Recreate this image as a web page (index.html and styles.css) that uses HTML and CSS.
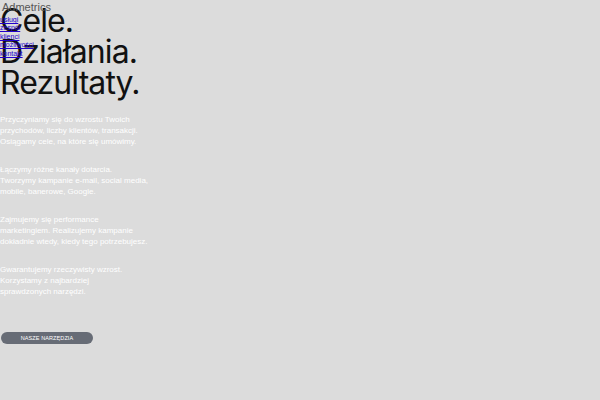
FILE: index.html
```html
<!DOCTYPE html>
<html lang="pl">
<head>
<meta charset="utf-8">
<title>Admetrics</title>
<link rel="stylesheet" href="styles.css">
</head>
<body>
<nav class="nav">
  <div class="brand">Admetrics</div>
  <ul class="menu">
    <li><a href="#">usługi</a></li>
    <li><a href="#">zespół</a></li>
    <li><a href="#">klienci</a></li>
    <li><a href="#">możliwości</a></li>
    <li><a href="#">kontakt</a></li>
  </ul>
</nav>
<main class="hero">
  <h1 class="title">Cele.<br>Działania.<br>Rezultaty.</h1>
  <div class="copy">
    <p>Przyczyniamy się do wzrostu Twoich<br>przychodów, liczby klientów, transakcji.<br>Osiągamy cele, na które się umówimy.</p>
    <p>Łączymy różne kanały dotarcia.<br>Tworzymy kampanie e-mail, social media,<br>mobile, banerowe, Google.</p>
    <p>Zajmujemy się performance<br>marketingiem. Realizujemy kampanie<br>dokładnie wtedy, kiedy tego potrzebujesz.</p>
    <p>Gwarantujemy rzeczywisty wzrost.<br>Korzystamy z najbardziej<br>sprawdzonych narzędzi.</p>
  </div>
  <a class="btn" href="#">NASZE NARZĘDZIA</a>
</main>
</body>
</html>
```
FILE: styles.css
```css
html, body {
  margin: 0;
  padding: 0;
  background: #dcdcdc;
}
body {
  font-family: "Liberation Sans", Arial, sans-serif;
  width: 600px;
  height: 400px;
  overflow: hidden;
  position: relative;
}
.nav {
  position: absolute;
  top: 0;
  left: 0;
  z-index: 2;
}
.brand {
  font-size: 11px;
  line-height: 11px;
  color: #555;
  padding: 2px 0 0 2px;
}
.menu {
  list-style: none;
  margin: 3px 0 0 0;
  padding: 0;
}
.menu li {
  font-size: 7px;
  line-height: 8.4px;
}
.menu a {
  color: #2200cc;
}
.title {
  margin: 0;
  padding-top: 5px;
  font-family: Inter, "Noto Sans", sans-serif;
  font-weight: 400;
  font-size: 32px;
  line-height: 31px;
  letter-spacing: -0.9px;
  color: #111;
}
.copy {
  margin-top: 16px;
}
.copy p {
  margin: 0 0 17px 0;
  font-size: 8px;
  line-height: 11px;
  color: #fff;
}
.btn {
  display: inline-flex;
  align-items: center;
  justify-content: center;
  margin-top: 18px;
  margin-left: 1px;
  width: 92px;
  height: 12px;
  border-radius: 6px;
  background: #676c76;
  color: #fff;
  font-size: 5.5px;
  text-decoration: none;
  letter-spacing: 0.1px;
}
```
